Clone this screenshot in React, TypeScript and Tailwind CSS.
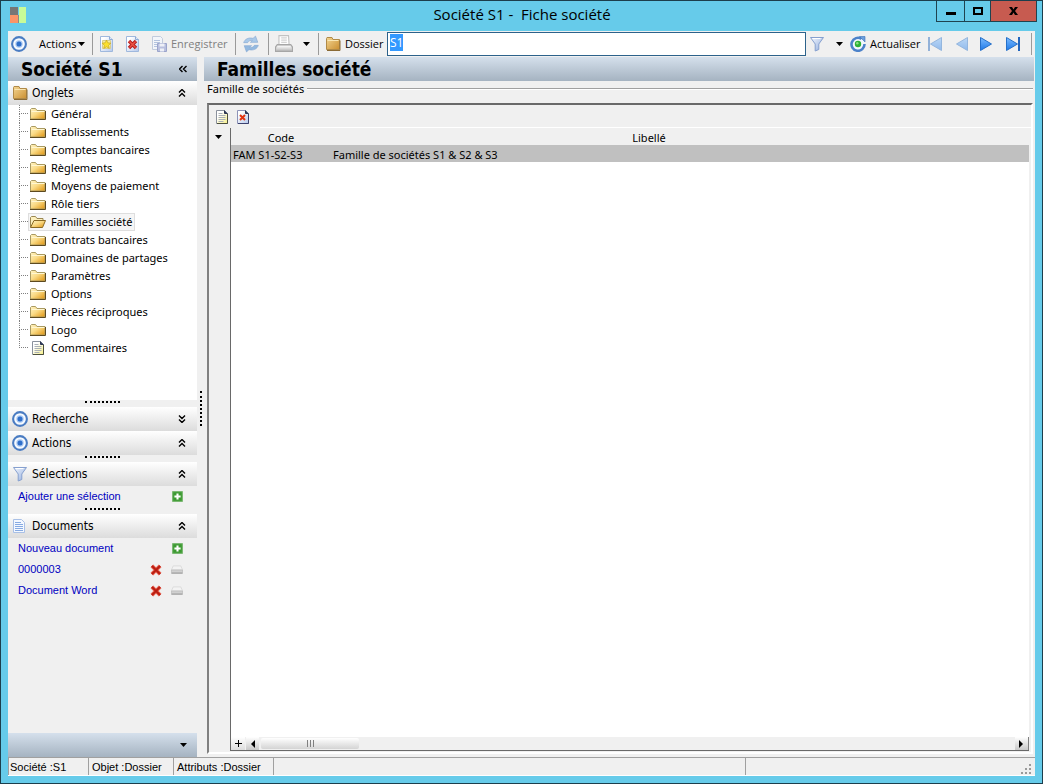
import { useEffect, useRef, type ReactNode } from 'react'
import clsx from 'clsx'

const TREE_ITEMS = [
  'Général',
  'Etablissements',
  'Comptes bancaires',
  'Règlements',
  'Moyens de paiement',
  'Rôle tiers',
  'Familles société',
  'Contrats bancaires',
  'Domaines de partages',
  'Paramètres',
  'Options',
  'Pièces réciproques',
  'Logo',
  'Commentaires',
]

const SELECTED_ITEM = 'Familles société'

const DOCUMENTS = ['0000003', 'Document Word']

/* ---------- Icons ---------- */

// Shared gradients, referenced by id from the icons below
const IconDefs = () => (
  <svg className="absolute h-0 w-0" aria-hidden="true">
    <defs>
      <linearGradient id="folder" x1="0" y1="0" x2="1" y2="1">
        <stop offset="0" stopColor="#fff3c4" />
        <stop offset="0.45" stopColor="#fadb86" />
        <stop offset="1" stopColor="#e0930f" />
      </linearGradient>
      <linearGradient id="folder-dark" x1="0" y1="0" x2="1" y2="1">
        <stop offset="0" stopColor="#f3d592" />
        <stop offset="1" stopColor="#cb8f30" />
      </linearGradient>
      <linearGradient id="page-yellow" x1="0" y1="0" x2="1" y2="1">
        <stop offset="0.3" stopColor="#ffffff" />
        <stop offset="1" stopColor="#f5ee86" />
      </linearGradient>
      <linearGradient id="page-blue" x1="0" y1="0" x2="1" y2="1">
        <stop offset="0.2" stopColor="#ffffff" />
        <stop offset="1" stopColor="#b5c8ec" />
      </linearGradient>
      <linearGradient id="funnel" x1="0" y1="0" x2="1" y2="1">
        <stop offset="0" stopColor="#f4f8ff" />
        <stop offset="1" stopColor="#8fabdc" />
      </linearGradient>
      <linearGradient id="arrow" x1="0" y1="0" x2="0" y2="1">
        <stop offset="0" stopColor="#7cbcff" />
        <stop offset="1" stopColor="#1d78e8" />
      </linearGradient>
    </defs>
  </svg>
)

interface IconProps {
  className?: string
  children: ReactNode
}

const Icon = ({ className = 'h-4 w-4', children }: IconProps) => (
  <svg viewBox="0 0 16 16" className={clsx('shrink-0', className)} fill="none" aria-hidden="true">
    {children}
  </svg>
)

const TargetIcon = () => (
  <Icon>
    <circle cx="8" cy="8" r="6.9" fill="#f6faff" stroke="#4a7cc2" strokeWidth="2.1" />
    <circle cx="8" cy="8" r="3.7" fill="#a9c8f2" />
    <circle cx="8" cy="8" r="2.5" fill="#2f6fca" />
  </Icon>
)

// Closed folder with a wide tab, on the toolbar and the panel header
const BigFolderIcon = () => (
  <Icon>
    <path d="M1.500 13.500V2.500l.5-1h5l1 2h6.500v10z" fill="url(#folder-dark)" stroke="#b08a48" />
    <path d="M2.500 4.500h11" stroke="#f9e6b3" />
    <path d="M2 14.500h13V4.500" stroke="#8a6a35" />
  </Icon>
)

const FolderIcon = () => (
  <Icon>
    <path d="M.5 13V3.500l1-1h4l1.500 2h8V13z" fill="url(#folder)" stroke="#a99a62" />
    <path d="M1.500 5.500h13" stroke="#fff7d2" />
    <path d="M0 13.500h15.500V5" stroke="#5d4a20" />
  </Icon>
)

const OpenFolderIcon = () => (
  <Icon>
    <path d="M.5 13V3.500l1-1h4l1.500 2h6V7" fill="#fdf0bd" stroke="#9a8752" />
    <path d="M.5 13.500 4 6.500h11.500L12.500 13.500z" fill="url(#folder)" stroke="#8a6a24" />
  </Icon>
)

const NoteIcon = () => (
  <Icon>
    <path d="M2.500 1.500h8l3 3v10h-11z" fill="url(#page-yellow)" stroke="#8a919c" />
    <path d="M10.500 1.500v3h3" fill="#33415f" stroke="#2b3450" />
    <path d="M13.500 5v9.500H3" stroke="#4c4f3c" />
    <path d="M4.500 4.500h4M4.500 6.500h7M4.500 8.500h7M4.500 10.500h7M4.500 12.500h5" stroke="#aab0b6" />
  </Icon>
)

const NoteDeleteIcon = () => (
  <Icon>
    <path d="M2.500 1.500h8l3 3v10h-11z" fill="url(#page-blue)" stroke="#8d93b8" />
    <path d="M10.500 1.500v3h3" fill="#33415f" stroke="#2b3450" />
    <path d="M13.500 5v9.500H3" stroke="#3d4270" />
    <path d="m5 6 5 5M10 6l-5 5" stroke="#e2330f" strokeWidth="2" />
  </Icon>
)

const DocStarIcon = () => (
  <Icon>
    <path d="M1.500.5h9l3 3v12h-12z" fill="url(#page-blue)" stroke="#9fb8dd" />
    <path d="M10.500.5v3h3" fill="#dbe7f8" stroke="#8fabd6" />
    <path d="M3.500 4.500h8v8h-8z" fill="#f7eda0" stroke="#d9cf8c" />
    <path d="m7.500 4 1.300 2.800 3 .4-2.200 2.100.6 3-2.700-1.500-2.700 1.500.6-3-2.200-2.100 3-.4z" fill="#fbe02e" stroke="#c9a81f" strokeWidth=".7" />
  </Icon>
)

const DocDeleteIcon = () => (
  <Icon>
    <path d="M1.500.5h9l3 3v12h-12z" fill="url(#page-blue)" stroke="#9fb8dd" />
    <path d="M10.500.5v3h3" fill="#dbe7f8" stroke="#8fabd6" />
    <path d="m4 5 7 7M11 5l-7 7" stroke="#b81d1d" strokeWidth="3.400" />
    <path d="m4.500 5.500 6 6M10.500 5.500l-6 6" stroke="#ec5547" strokeWidth="1.400" />
  </Icon>
)

const DocSaveIcon = () => (
  <Icon>
    <path d="M1.500.5h8l2 2v11h-10z" fill="#f2f5fa" stroke="#c1cbdc" />
    <path d="M3 4.500h6M3 6.500h6M3 8.500h4M3 10.500h3" stroke="#b3c3de" />
    <path d="M6.500 7.500h9v8h-9z" fill="#b9c0df" stroke="#9ba4cb" />
    <path d="M8.500 7.500h5v3h-5zM9 12.500h4v3H9z" fill="#eef0f7" />
  </Icon>
)

const SyncIcon = () => (
  <Icon className="h-[18px] w-[18px]">
    <path d="M1.500 6.800C2.500 3.500 6 2 9.800 3L12 1l2 5.500H7.500l1.800-1.700C7.500 4.600 5.800 5.300 5 6.800z" fill="#a9c9e9" stroke="#86a9d2" strokeWidth=".6" />
    <path d="M14.500 9.200c-1 3.300-4.500 4.800-8.300 3.800L4 15 2 9.500h6.500l-1.800 1.700c1.800.2 3.500-.5 4.300-2z" fill="#93b9e0" stroke="#86a9d2" strokeWidth=".6" />
  </Icon>
)

const PrinterIcon = () => (
  <Icon className="h-[18px] w-[18px]">
    <path d="M3.500 8.500V.5H12l.5 8z" fill="#fdfdfd" stroke="#c2c2c2" />
    <path d="M5.500 2.500h5M5.500 4.500h5M5.500 6.500h5" stroke="#d2d2d2" />
    <path d="M.5 14.500v-4L2 8.500h12l1.500 2v4z" fill="#d9d9d9" stroke="#a6a6a6" />
    <path d="M2 10.500h12" stroke="#fafafa" />
    <path d="M1 13.500h14" stroke="#b5b5b5" />
  </Icon>
)

const FunnelIcon = () => (
  <Icon>
    <path d="M1.500 1.500h13L9.800 8v5.500L6.200 15V8z" fill="url(#funnel)" stroke="#86a0cf" />
    <path d="M3.500 2.500h8" stroke="#ffffff" />
  </Icon>
)

const ReloadIcon = () => (
  <Icon>
    <circle cx="8" cy="8" r="6.400" fill="#f2f7fd" />
    <path d="M11.500 2.800A6.500 6.500 0 1 0 14.500 8" stroke="#4c82ca" strokeWidth="2.600" />
    <path d="M9.500.5H15V6z" fill="#6c9fdd" stroke="#3c72bb" strokeWidth=".6" />
    <circle cx="8" cy="8" r="3.200" fill="#2eb135" />
    <circle cx="7.300" cy="7.200" r="1.200" fill="#8fe08a" />
  </Icon>
)

const TextPageIcon = () => (
  <Icon>
    <path d="M1.500 1.500h8l3 3v10h-11z" fill="#f4f8ff" stroke="#a9c0e6" />
    <path d="M3 4.500h6M3 6.500h8M3 8.500h8M3 10.500h8M3 12.500h8" stroke="#86aae2" />
  </Icon>
)

const PlusIcon = () => (
  <Icon className="h-[11px] w-[11px]">
    <rect x="1" y="1" width="14" height="14" fill="#3c9a31" stroke="#6fb266" strokeWidth="1.500" />
    <path d="M8 3.500v9M3.500 8h9" stroke="#ffffff" strokeWidth="3" />
  </Icon>
)

const CrossIcon = () => (
  <Icon className="h-3 w-3">
    <path d="m2.500 2.500 11 11M13.500 2.500l-11 11" stroke="#e8604f" strokeWidth="5" />
    <path d="m2.500 2.500 11 11M13.500 2.500l-11 11" stroke="#b81c10" strokeWidth="2.800" />
  </Icon>
)

const DriveIcon = () => (
  <Icon className="h-3 w-3">
    <path d="M3 2.500h10L15.500 8H.5z" fill="#f3f3f3" stroke="#d6d6d6" />
    <path d="M.5 8h15v4.500H.5z" fill="#d0d0d0" stroke="#bababa" />
    <path d="M1 12h14" stroke="#8f8f8f" />
  </Icon>
)

const Caret = () => (
  <svg viewBox="0 0 7 4" className="h-1 w-[7px] shrink-0" aria-hidden="true">
    <path d="M0 0h7L3.500 4z" fill="#000000" />
  </svg>
)

// Double chevron used by the collapsible panels
const Chevrons = ({ direction }: { direction: 'up' | 'down' | 'left' }) => (
  <svg
    viewBox="0 0 8 8"
    className={clsx(
      'h-2 w-2 shrink-0',
      direction === 'down' && 'rotate-180',
      direction === 'left' && '-rotate-90',
    )}
    fill="none"
    aria-hidden="true"
  >
    <path d="M1 3.500l3-3 3 3M1 7.500l3-3 3 3" stroke="#000000" strokeWidth="1.400" />
  </svg>
)

const NavArrow = ({ flip, bar, faded }: { flip?: boolean; bar?: boolean; faded?: boolean }) => (
  <svg
    viewBox="0 0 16 16"
    className={clsx('h-4 w-4 shrink-0', flip && '-scale-x-100', faded && 'opacity-45')}
    aria-hidden="true"
  >
    <path d="M1.500 1.500 12.500 8l-11 6.500z" fill="url(#arrow)" stroke="#2670c9" />
    {bar && <path d="M13 1h2v14h-2z" fill="#2265bd" />}
  </svg>
)

/* ---------- Small pieces ---------- */

const Separator = () => <span className="h-[22px] w-px shrink-0 bg-[#9a9a9a]" />

const Grip = () => (
  <div className="flex h-[7px] shrink-0 items-start justify-center bg-[#f0f0f0] pt-px">
    <span className="w-[35px] border-t-2 border-dotted border-black" />
  </div>
)

interface PanelHeaderProps {
  icon: ReactNode
  title: string
  collapsed?: boolean
}

const PanelHeader = ({ icon, title, collapsed }: PanelHeaderProps) => (
  <button
    type="button"
    aria-expanded={!collapsed}
    className="flex h-6 w-full shrink-0 items-center gap-1 bg-linear-to-b from-white to-[#dcdcdc] pr-[11px] pl-1 text-left font-['DejaVu_Sans_Condensed','DejaVu_Sans',sans-serif] text-[12px]"
  >
    {icon}
    <span className="flex-1">{title}</span>
    <Chevrons direction={collapsed ? 'down' : 'up'} />
  </button>
)

const Toolbar = () => {
  const fieldRef = useRef<HTMLInputElement>(null)

  // The file name starts out selected, ready to be typed over
  useEffect(() => {
    fieldRef.current?.focus()
    fieldRef.current?.select()
  }, [])

  return (
    <div role="toolbar" aria-label="Actions" className="flex h-[26px] items-center bg-[#f0f0f0] px-[3px] font-['Open_Sans','Noto_Sans',sans-serif] text-[11px]">
      <TargetIcon />
      <button type="button" className="ml-3 flex w-[46px] shrink-0 items-center justify-between">
        Actions
        <Caret />
      </button>
      <div className="ml-[7px] flex items-center gap-[10px]">
        <Separator />
        <button type="button" aria-label="Nouveau" className="-ml-1"><DocStarIcon /></button>
        <button type="button" aria-label="Supprimer"><DocDeleteIcon /></button>
      </div>
      <button type="button" disabled className="ml-[10px] flex w-[77px] shrink-0 items-center gap-1 text-[#808080]">
        <DocSaveIcon />
        Enregistrer
      </button>
      <div className="ml-[7px] flex items-center gap-2">
        <Separator />
        <button type="button" aria-label="Synchroniser" className="-ml-[2px]"><SyncIcon /></button>
        <Separator />
        <button type="button" aria-label="Imprimer" className="-ml-[2px] flex items-center gap-[10px]">
          <PrinterIcon />
          <Caret />
        </button>
        <Separator />
      </div>
      <label htmlFor="dossier" className="ml-[6px] flex w-[62px] shrink-0 items-center gap-1">
        <BigFolderIcon />
        Dossier
      </label>
      <input
        id="dossier"
        ref={fieldRef}
        defaultValue="S1"
        className="h-6 min-w-0 flex-1 border border-[#2c628b] bg-white px-[2px] pb-1 text-[12px] outline-none selection:bg-[#3399ff] selection:text-white"
      />
      <button type="button" aria-label="Filtrer" className="ml-[3px] flex items-center gap-[11px]">
        <FunnelIcon />
        <Caret />
      </button>
      <button type="button" className="ml-[7px] flex w-[70px] shrink-0 items-center gap-1">
        <ReloadIcon />
        Actualiser
      </button>
      <div className="ml-[7px] flex items-center gap-[10px]">
        <button type="button" aria-label="Premier" disabled><NavArrow flip bar faded /></button>
        <button type="button" aria-label="Précédent" disabled><NavArrow flip faded /></button>
        <button type="button" aria-label="Suivant"><NavArrow /></button>
        <button type="button" aria-label="Dernier"><NavArrow bar /></button>
        <Separator />
      </div>
    </div>
  )
}

const Sidebar = () => (
  <aside className="flex w-[189px] shrink-0 flex-col bg-[#f0f0f0]">
    <div className="flex h-6 items-center justify-between bg-linear-to-b from-[#d5e0ec] to-[#a5b3c1] pr-[10px] pl-[13px]">
      <h2 className="font-['DejaVu_Sans_Condensed','DejaVu_Sans',sans-serif] text-[19px] leading-6 font-bold">Société S1</h2>
      <button type="button" aria-label="Réduire"><Chevrons direction="left" /></button>
    </div>

    <PanelHeader icon={<BigFolderIcon />} title="Onglets" />
    <ul role="tree" aria-label="Onglets" className="h-[295px] bg-white pl-[11px]">
      {TREE_ITEMS.map((item, i) => {
        const last = i === TREE_ITEMS.length - 1
        const selected = item === SELECTED_ITEM
        return (
          <li key={item} role="treeitem" aria-selected={selected} className="flex h-[18px] items-center">
            {/* Dotted guide lines */}
            <span className="flex h-full w-[9px] shrink-0 flex-col">
              <span className="h-[9px] border-b border-l border-dotted border-[#808080]" />
              {!last && <span className="flex-1 border-l border-dotted border-[#808080]" />}
            </span>
            <a
              href="#"
              className={clsx(
                'flex h-[18px] items-center gap-[5px] border pr-[2px] pl-px whitespace-nowrap',
                selected ? 'border-[#dedede] bg-[#f6f6f6]' : 'border-transparent',
              )}
            >
              {last ? <NoteIcon /> : selected ? <OpenFolderIcon /> : <FolderIcon />}
              {item}
            </a>
          </li>
        )
      })}
    </ul>
    <Grip />
    <PanelHeader icon={<TargetIcon />} title="Recherche" collapsed />
    <PanelHeader icon={<TargetIcon />} title="Actions" />
    <Grip />
    <PanelHeader icon={<FunnelIcon />} title="Sélections" />
    <div className="flex h-[21px] items-center justify-between pr-[14px] pl-[10px] font-['Liberation_Sans',Arial,sans-serif]">
      <a href="#" className="text-[#0000c0]">Ajouter une sélection</a>
      <button type="button" aria-label="Ajouter une sélection"><PlusIcon /></button>
    </div>
    <Grip />
    <PanelHeader icon={<TextPageIcon />} title="Documents" />
    <ul className="flex-1 font-['Liberation_Sans',Arial,sans-serif]">
      <li className="flex h-[21px] items-center justify-between pr-[14px] pl-[10px]">
        <a href="#" className="text-[#0000c0]">Nouveau document</a>
        <button type="button" aria-label="Nouveau document"><PlusIcon /></button>
      </li>
      {DOCUMENTS.map((name) => (
        <li key={name} className="flex h-[21px] items-center gap-[9px] pr-[14px] pl-[10px]">
          <a href="#" className="flex-1 text-[#0000c0]">{name}</a>
          <button type="button" aria-label={`Supprimer ${name}`}><CrossIcon /></button>
          <button type="button" aria-label={`Ouvrir ${name}`}><DriveIcon /></button>
        </li>
      ))}
    </ul>
    <div className="flex h-6 items-center justify-end bg-linear-to-b from-[#d5e0ec] to-[#a5b3c1] pr-[10px]">
      <button type="button" aria-label="Plus de volets"><Caret /></button>
    </div>
  </aside>
)

const FamilyGrid = () => (
  <fieldset className="flex min-w-0 flex-1 flex-col pr-[2px]">
    <legend className="flex h-4 w-full items-center gap-[3px] pl-[3px] leading-4">
      Famille de sociétés
      <span className="h-[2px] flex-1 border-t border-[#a0a0a0] bg-white" />
    </legend>
    <div className="mt-[6px] mb-[3px] ml-[3px] flex flex-1 flex-col border-2 border-t-[#696969] border-r-white border-b-white border-l-[#808080] bg-[#f0f0f0]">
      <div className="flex h-[23px] items-center gap-[5px] pl-[5px]">
        <button type="button" aria-label="Ajouter"><NoteIcon /></button>
        <button type="button" aria-label="Retirer"><NoteDeleteIcon /></button>
        <span className="ml-1 flex-1 self-end border-b border-white" />
      </div>
      <div className="flex flex-1">
        <div className="flex w-[21px] justify-center pt-[7px] pr-[3px]">
          <Caret />
        </div>
        <div className="mr-[2px] mb-px flex flex-1 flex-col border-b border-l border-[#696969] bg-white">
          <table className="w-full table-fixed border-collapse">
            <colgroup>
              <col className="w-[100px]" />
              <col />
              <col className="w-[62px]" />
            </colgroup>
            <thead>
              <tr className="h-[17px] bg-[#f0f0f0]">
                <th className="p-0 pt-[2px] leading-[15px] font-normal">Code</th>
                <th className="p-0 pt-[2px] leading-[15px] font-normal">Libellé</th>
                <th className="p-0" />
              </tr>
            </thead>
            <tbody>
              <tr className="h-[17px] bg-[#c0c0c0]">
                <td className="p-0 pt-[2px] pl-[2px] leading-[15px]">FAM S1-S2-S3</td>
                <td className="p-0 pt-[2px] pl-[2px] leading-[15px]">Famille de sociétés S1 &amp; S2 &amp; S3</td>
                <td className="p-0" />
              </tr>
            </tbody>
          </table>
          <div className="flex-1" />
          {/* Horizontal scroll bar */}
          <div className="flex h-[13px] items-center bg-[#f0f0f0]">
            <button type="button" aria-label="Ajouter une ligne" className="flex h-full w-[14px] items-center justify-center bg-linear-to-b from-white to-[#dcdcdc]">
              <svg viewBox="0 0 7 7" className="h-[7px] w-[7px]" aria-hidden="true">
                <path d="M3 0h1v3h3v1H4v3H3V4H0V3h3z" fill="#000000" />
              </svg>
            </button>
            <button type="button" aria-label="Défiler à gauche" className="ml-px flex h-full w-[13px] items-center justify-center bg-linear-to-b from-white to-[#c8c8c8]">
              <svg viewBox="0 0 4 8" className="h-2 w-1" aria-hidden="true"><path d="M4 0v8L0 4z" /></svg>
            </button>
            <div className="ml-[2px] flex h-[11px] w-[98px] items-center justify-center gap-[2px] rounded-xs bg-linear-to-b from-white to-[#d4d4d4]">
              <span className="h-[7px] w-px bg-[#808080]" />
              <span className="h-[7px] w-px bg-[#808080]" />
              <span className="h-[7px] w-px bg-[#808080]" />
            </div>
            <div className="flex-1" />
            <button type="button" aria-label="Défiler à droite" className="flex h-full w-[14px] items-center justify-center border-r border-[#808080] bg-linear-to-b from-white to-[#c8c8c8] pr-[2px]">
              <svg viewBox="0 0 4 8" className="h-2 w-1" aria-hidden="true"><path d="M0 0v8l4-4z" /></svg>
            </button>
          </div>
        </div>
      </div>
    </div>
  </fieldset>
)

const StatusBar = () => (
  <footer className="flex h-[19px] items-stretch border-t border-b border-t-[#a0a0a0] border-b-white bg-[#f0f0f0] font-['Liberation_Sans',Arial,sans-serif] leading-[18px]">
    <div className="w-[81px] border-r border-l border-[#a0a0a0] pl-px">Société :S1</div>
    <div className="w-[85px] border-r border-[#a0a0a0] pl-[3px]">Objet :Dossier</div>
    <div className="w-[100px] border-r border-[#a0a0a0] pl-[3px]">Attributs :Dossier</div>
    <div className="flex-1 border-r border-[#a0a0a0]" />
    <div className="flex w-[289px] items-end justify-end pr-1 pb-px">
      <svg viewBox="0 0 10 10" className="h-[10px] w-[10px]" fill="#9a9a9a" aria-hidden="true">
        <path d="M8 0h2v2H8zM4 4h2v2H4zM8 4h2v2H8zM0 8h2v2H0zM4 8h2v2H4zM8 8h2v2H8z" />
      </svg>
    </div>
  </footer>
)

const App = () => (
  <div className="flex min-h-screen flex-col border border-[#1c3e4c] bg-[#66cbea] px-[7px] pb-[7px] font-['Noto_Sans','Open_Sans',sans-serif] text-[11px] text-black">
    <IconDefs />

    {/* Title bar */}
    <header className="flex h-[30px] shrink-0 items-start">
      <svg viewBox="0 0 16 16" className="mt-[6px] ml-[2px] h-4 w-4" aria-hidden="true">
        <path d="M0 0h8v8H0z" fill="#767676" />
        <path d="M9 0h7v16H9z" fill="#c8fb98" />
        <path d="M0 8h8v8H0z" fill="#fb9468" />
        <path d="M8 8h1v8H8z" fill="#8a8a8a" />
      </svg>
      <h1 className="ml-[82px] flex-1 text-center font-['Open_Sans','Noto_Sans',sans-serif] text-[15px] leading-[26px] whitespace-pre">Société S1 -  Fiche société</h1>
      <div className="-mr-[2px] flex h-[21px] border border-t-0 border-[#1f4350]">
        <button type="button" aria-label="Réduire" className="flex w-7 items-center justify-center border-r border-[#1f4350]">
          <span className="mt-1 h-[3px] w-[10px] bg-black" />
        </button>
        <button type="button" aria-label="Agrandir" className="flex w-[26px] items-center justify-center border-r border-[#1f4350]">
          <span className="h-2 w-[10px] border-2 border-black" />
        </button>
        <button type="button" aria-label="Fermer" className="flex w-[45px] items-center justify-center bg-[#c75b50]">
          <svg viewBox="0 0 9 8" className="h-2 w-[9px]" aria-hidden="true">
            <path d="M0 0h3l1.500 2.500L6 0h3L6 4l3 4H6L4.500 5.500 3 8H0l3-4z" fill="#000000" />
          </svg>
        </button>
      </div>
    </header>

    <div className="flex flex-1 flex-col bg-[#f0f0f0]">
      <Toolbar />
      <div className="flex flex-1">
        <Sidebar />
        <div className="w-[7px] shrink-0 pt-[334px] pl-[3px]">
          <div className="h-[35px] border-l-2 border-dotted border-black" />
        </div>
        <main className="flex min-w-0 flex-1 flex-col">
          <h2 className="mr-px h-6 bg-linear-to-b from-[#d5e0ec] to-[#a5b3c1] pl-[13px] font-['DejaVu_Sans_Condensed','DejaVu_Sans',sans-serif] text-[19px] leading-6 font-bold">
            Familles société
          </h2>
          <FamilyGrid />
        </main>
      </div>
      <StatusBar />
    </div>
  </div>
)

export default App
